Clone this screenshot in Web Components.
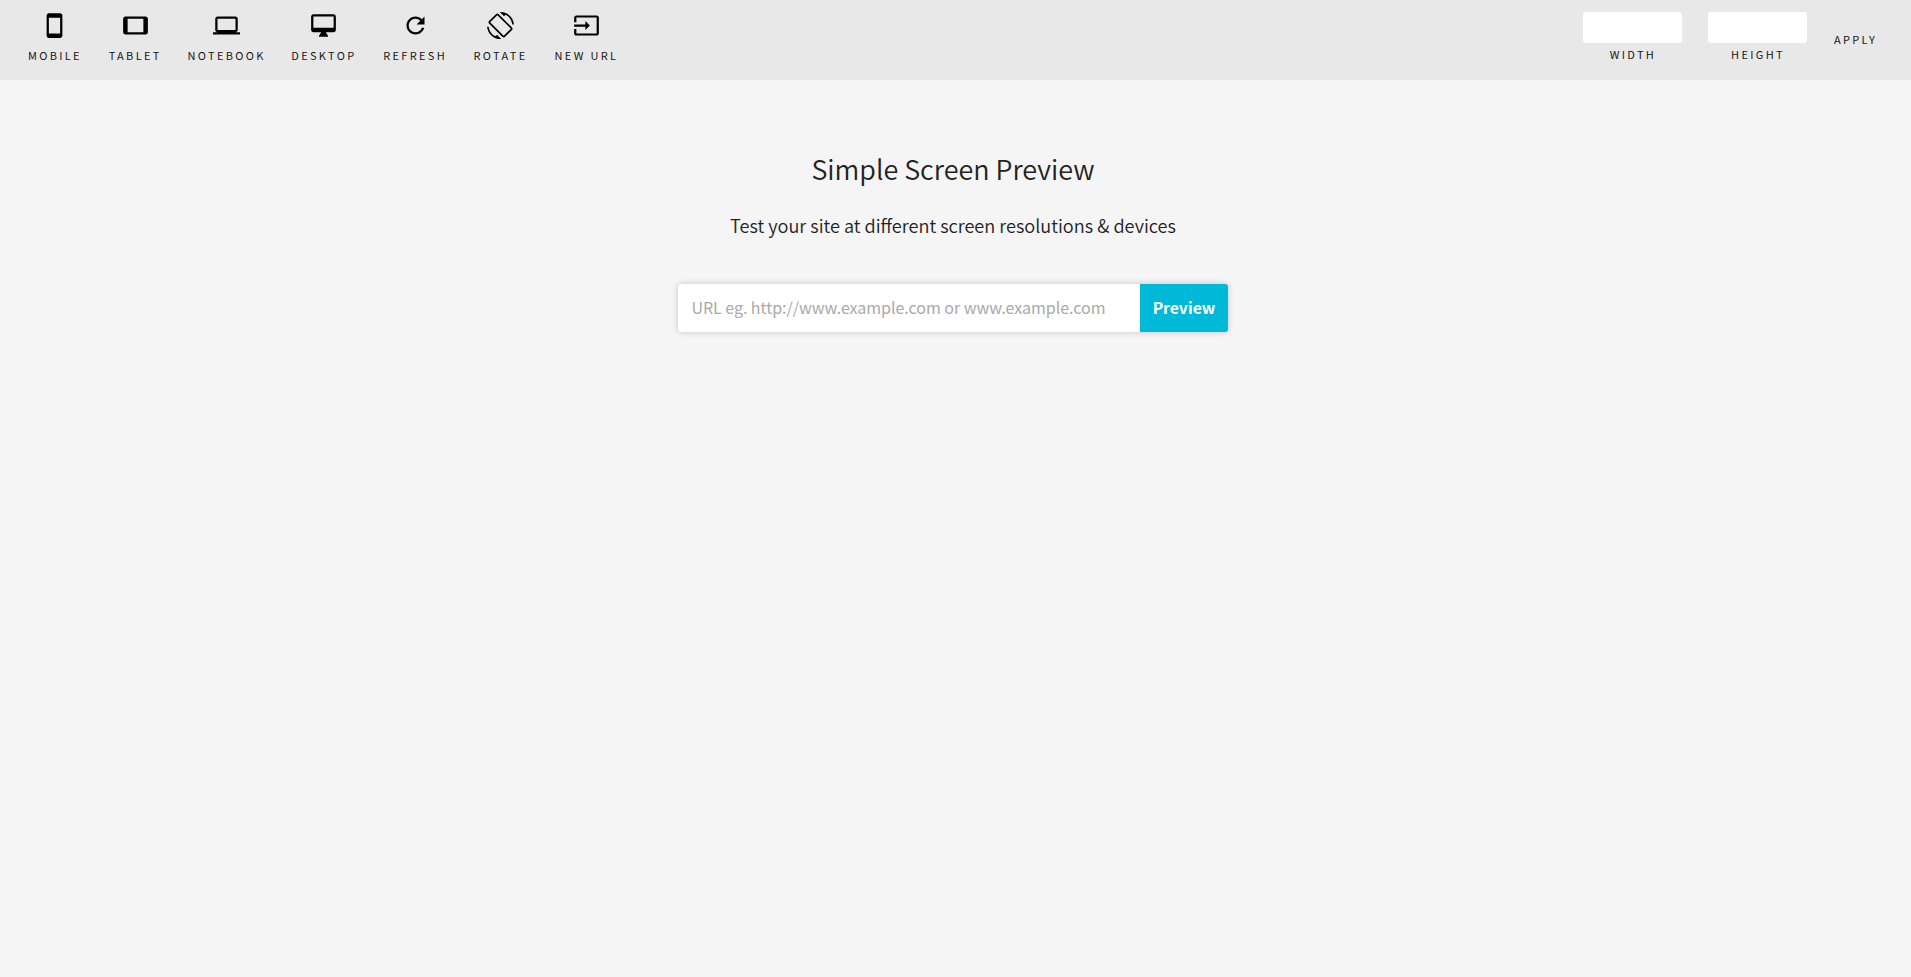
<!DOCTYPE html>
<html lang="en">
<head>
<meta charset="utf-8">
<title>Simple Screen Preview</title>
<style>
html,body{margin:0;height:100%}
body{background:#f5f5f5;color:#222;font-family:"Noto Sans CJK SC","Noto Sans",sans-serif;overflow:hidden}
</style>
</head>
<body>
<preview-app></preview-app>
<script>
const define = (name, html, setup) => {
  const tpl = document.createElement('template');
  tpl.innerHTML = html;
  customElements.define(name, class extends HTMLElement {
    constructor() {
      super();
      this.attachShadow({mode: 'open'}).append(tpl.content.cloneNode(true));
    }
    connectedCallback() { if (setup) setup(this, this.shadowRoot); }
  });
};

const ICONS = {
  mobile: 'M17 1.01L7 1c-1.1 0-2 .9-2 2v18c0 1.1.9 2 2 2h10c1.1 0 2-.9 2-2V3c0-1.1-.9-1.99-2-1.99zM17 19H7V5h10v14z',
  tablet: 'M21 4H3c-1.1 0-2 .9-2 2v12c0 1.1.9 2 2 2h18c1.1 0 1.99-.9 1.99-2L23 6c0-1.1-.9-2-2-2zm-2 14H5V6h14v12z',
  notebook: 'M20 18c1.1 0 1.99-.9 1.99-2L22 6c0-1.1-.9-2-2-2H4c-1.1 0-2 .9-2 2v10c0 1.1.9 2 2 2H0v2h24v-2h-4zM4 6h16v10H4V6z',
  desktop: 'M21 2H3c-1.1 0-2 .9-2 2v12c0 1.1.9 2 2 2h7l-2 3v1h8v-1l-2-3h7c1.1 0 2-.9 2-2V4c0-1.1-.9-2-2-2zm0 12H3V4h18v10z',
  refresh: 'M17.65 6.35C16.2 4.9 14.21 4 12 4c-4.42 0-7.99 3.58-7.99 8s3.57 8 7.99 8c3.73 0 6.84-2.55 7.73-6h-2.08c-.82 2.33-3.04 4-5.65 4-3.31 0-6-2.69-6-6s2.69-6 6-6c1.66 0 3.14.69 4.22 1.78L13 11h7V4l-2.35 2.35z',
  rotate: 'M16.48 2.52c3.27 1.55 5.61 4.72 5.97 8.48h1.5C23.44 4.84 18.29 0 12 0l-.66.03 3.81 3.81 1.33-1.32zm-6.25-.77c-.59-.59-1.54-.59-2.12 0L1.75 8.11c-.59.59-.59 1.54 0 2.12l12.02 12.02c.59.59 1.54.59 2.12 0l6.36-6.36c.59-.59.59-1.54 0-2.12L10.23 1.75zm4.6 19.44L2.81 9.17l6.36-6.36 12.02 12.02-6.36 6.36zm-7.31.29C4.25 19.94 1.91 16.76 1.55 13H.05C.56 19.16 5.71 24 12 24l.66-.03-3.81-3.81-1.33 1.32z',
  input: 'M21 3.01H3c-1.1 0-2 .9-2 2V9h2V4.99h18v14.03H3V15H1v4.01c0 1.1.9 1.98 2 1.98h18c1.1 0 2-.88 2-1.98v-14c0-1.11-.9-2-2-2zM11 16l4-4-4-4v3H1v2h10v3z'
};

define('tool-label', `<style>
:host{display:block;color:#161616;font-size:11px;line-height:20px;letter-spacing:2.32px;white-space:nowrap}
</style><slot></slot>`);

define('tool-button', `<style>
:host{display:flex;flex-direction:column;flex:none;cursor:pointer}
.col{display:flex;flex-direction:column;align-items:center;width:max-content}
svg{display:block;width:27px;height:27px;fill:#000;margin:0 0 6px}
</style><div class="col"><svg viewBox="0 0 24 24"><path/></svg><tool-label><slot></slot></tool-label></div>`,
(el, root) => {
  root.querySelector('path').setAttribute('d', ICONS[el.getAttribute('icon')]);
  el.style.width = el.getAttribute('size') + 'px';
});

define('size-field', `<style>
:host{display:flex;flex-direction:column;align-items:center;width:99px;flex:none}
input{display:block;box-sizing:border-box;width:99px;height:31px;margin:0 0 1px;padding:4px;border:0;border-radius:3px;background:#fff;font:inherit;outline:0}
tool-label{padding-left:1px}
</style><input type="text"><tool-label><slot></slot></tool-label>`);

define('tool-bar', `<style>
:host{display:flex;justify-content:space-between;box-sizing:border-box;height:80px;background:#e8e8e8;padding:12px 31px 0 28px}
.group{display:flex;align-items:flex-start}
.right{gap:26px}
.apply{margin-top:17px;padding-left:1px;width:46px}
</style>
<div class="group">
<tool-button icon="mobile" size="80.7">MOBILE</tool-button>
<tool-button icon="tablet" size="78.9">TABLET</tool-button>
<tool-button icon="notebook" size="103.7">NOTEBOOK</tool-button>
<tool-button icon="desktop" size="92">DESKTOP</tool-button>
<tool-button icon="refresh" size="90.3">REFRESH</tool-button>
<tool-button icon="rotate" size="81">ROTATE</tool-button>
<tool-button icon="input" size="64">NEW URL</tool-button>
</div>
<div class="group right">
<size-field>WIDTH</size-field>
<size-field>HEIGHT</size-field>
<tool-label class="apply">APPLY</tool-label>
</div>`);

define('url-form', `<style>
:host{display:flex;width:550px;height:48px;border-radius:3px;box-shadow:0 0 6px rgba(0,0,0,.2);overflow:hidden}
input{flex:1;min-width:0;box-sizing:border-box;border:0;outline:0;margin:0;padding:0 13.4px 2px;background:#fff;color:#222;font:16px "Noto Sans CJK SC","Noto Sans",sans-serif;letter-spacing:-.03px}
input::placeholder{color:#a9a9a9;opacity:1}
button{flex:none;width:88px;border:0;margin:0;padding:0 0 2px;background:#00b8d8;color:#fff;font:700 15.74px "Noto Sans CJK SC","Noto Sans",sans-serif}
</style><input type="text" placeholder="URL eg. http://www.example.com or www.example.com"><button>Preview</button>`);

define('preview-app', `<style>
:host{display:block}
main{display:flex;flex-direction:column;align-items:center;padding:69px 5px 0 0}
h1{margin:0;font-weight:350;font-size:26.95px;line-height:40px}
p{margin:22px 0 45px;font-weight:350;font-size:18.15px;line-height:28px}
</style>
<tool-bar></tool-bar>
<main><h1>Simple Screen Preview</h1>
<p>Test your site at different screen resolutions &amp; devices</p>
<url-form></url-form></main>`);
</script>
</body>
</html>
